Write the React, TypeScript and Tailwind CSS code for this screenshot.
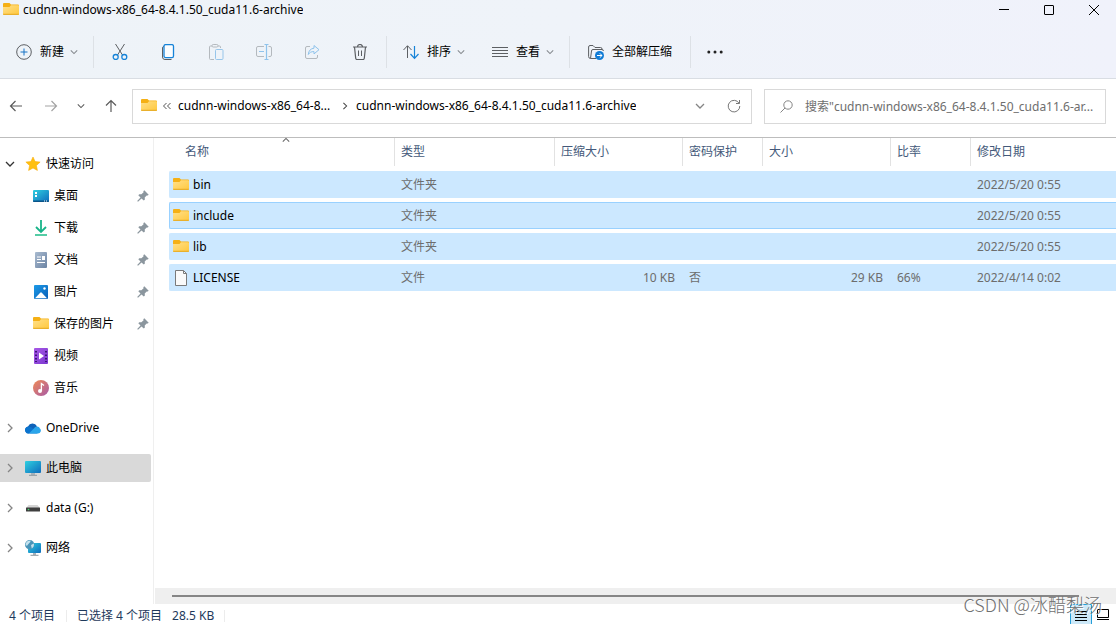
import { useState } from 'react';
import type { ReactNode } from 'react';
import clsx from 'clsx';

const ARCHIVE = 'cudnn-windows-x86_64-8.4.1.50_cuda11.6-archive';

type IconProps = { className?: string };

function FolderIcon({ className }: IconProps) {
  return (
    <svg viewBox="0 1 16 16" className={clsx('size-4 shrink-0', className)} aria-hidden="true">
      <defs>
        <linearGradient id="folder-front" x1="0" y1="0" x2="1" y2="1">
          <stop offset="0" stopColor="#ffe08a" />
          <stop offset="1" stopColor="#ffc83d" />
        </linearGradient>
      </defs>
      <path d="M0 3a1 1 0 0 1 1-1h5.500L8 3.500h7a1 1 0 0 1 1 1V8H0z" fill="#f5b015" />
      <path d="M0 6h6.500L8 4.200h7a1 1 0 0 1 1 1V13a1 1 0 0 1-1 1H1a1 1 0 0 1-1-1z" fill="url(#folder-front)" />
      <path d="M0 12.800V13a1 1 0 0 0 1 1h14a1 1 0 0 0 1-1v-.2z" fill="#e9b02c" />
    </svg>
  );
}

function FileIcon() {
  return (
    <svg viewBox="0 0 16 16" className="size-4 shrink-0" aria-hidden="true">
      <path d="M2.500.5h8l3 3v12h-11z" fill="#fafafa" stroke="#7a7a7a" />
      <path d="M10.500.5v3h3" fill="none" stroke="#7a7a7a" />
    </svg>
  );
}

function Chevron({ dir, className }: { dir: 'down' | 'right' | 'up'; className?: string }) {
  const paths = {
    down: 'M1 3l4 4 4-4',
    right: 'M3 1l4 4-4 4',
    up: 'M1 7l4-4 4 4',
  };
  return (
    <svg
      viewBox="0 0 10 10"
      className={clsx('shrink-0', className)}
      fill="none"
      stroke="currentColor"
      strokeWidth="1.300"
      aria-hidden="true"
    >
      <path d={paths[dir]} />
    </svg>
  );
}

function PinIcon() {
  return (
    <svg viewBox="0 0 12 12" className="size-3 shrink-0" aria-hidden="true">
      <path d="M7.300.3L11.700 4.700l-1 .9-1-.1-2 2.100.2 2-1.100 1-2.300-2.200L1 11.800l-.8-.8 3.300-3.500L1.300 5.200l1-1 2.100.1 2.200-2.100-.3-1z" fill="#8b969e" />
    </svg>
  );
}

const placeIcons: Record<string, ReactNode> = {
  star: <path d="M8 1l2.100 4.600 5 .5-3.700 3.400 1 4.900L8 12l-4.400 2.400 1-4.900L.9 6.100l5-.5z" fill="#ffc010" stroke="#f8ac0b" strokeWidth=".6" />,
  desktop: (
    <>
      <rect x="0" y="2" width="16" height="12" rx="1" fill="url(#screen)" />
      <path d="M2 4h2v2H2zM2 7h2v2H2z" fill="#fff" />
      <path d="M0 12.500h16v.5a1 1 0 0 1-1 1H1a1 1 0 0 1-1-1z" fill="#0b5488" />
      <path d="M11 13h1M13 13h1" stroke="#fff" />
    </>
  ),
  download: (
    <>
      <path d="M8 0v12M3 7l5 5 5-5" fill="none" stroke="#18b489" strokeWidth="1.800" />
      <path d="M2 15h12" stroke="#2bc08f" strokeWidth="1.600" />
    </>
  ),
  document: (
    <>
      <rect x="2" y="0" width="12" height="16" rx="1" fill="url(#paper)" />
      <path d="M4 5h4M4 7.500h4M4 10.500h8" stroke="#fff" strokeWidth="1.200" />
      <path d="M9 4h3v4H9z" fill="#fff" />
    </>
  ),
  picture: (
    <>
      <rect x="1" y="1" width="14" height="14" rx="1" fill="url(#photo)" />
      <path d="M2 14.200l5.200-5.500a1 1 0 0 1 1.600 0l5.200 5.500z" fill="#fff" />
      <circle cx="11.500" cy="4.500" r="1.200" fill="#fff" />
    </>
  ),
  video: (
    <>
      <rect x="1" y="0" width="14" height="16" rx="1" fill="url(#film)" />
      <path d="M2 3h2v1.500H2zM2 6.500h2V8H2zM2 10h2v1.500H2zM2 13h2v1H2zM12 3h2v1.500h-2zM12 6.500h2V8h-2zM12 10h2v1.500h-2zM12 13h2v1h-2z" fill="#3c1478" />
      <path d="M6 4.500v7L11 8z" fill="#fff" />
    </>
  ),
  music: (
    <>
      <circle cx="8" cy="8" r="8" fill="url(#disc)" />
      <circle cx="7" cy="11" r="2" fill="#fff" />
      <path d="M8.400 11V3.500l2.600 2" fill="none" stroke="#fff" strokeWidth="1.300" />
    </>
  ),
  cloud: (
    <>
      <path d="M3.500 13.500A3.500 3.500 0 0 1 3 6.600 5 5 0 0 1 12 6.200L9 10z" fill="#0f62b8" />
      <path d="M3.500 13.500A3.500 3.500 0 0 1 .6 8c2-2 5-1.500 7 .2l5 5.300z" fill="#0b74ce" />
      <path d="M4 13.500l6-6.200c2-1.400 4.200-.6 4.700 1a2.900 2.900 0 0 1-1.700 5.200z" fill="#2aa5ea" />
    </>
  ),
  computer: (
    <>
      <rect x="0" y="1" width="16" height="12" rx="1" fill="url(#screen)" />
      <path d="M6 13h4v2H6z" fill="#a8b3bb" />
      <path d="M4 15.300h8" stroke="#8b969e" />
    </>
  ),
  drive: (
    <>
      <path d="M3.500 5h9L15 8H1z" fill="#d5d5d5" />
      <rect x="1" y="7.500" width="14" height="4" rx=".6" fill="#3f3f3f" />
      <circle cx="3.500" cy="9.500" r=".8" fill="#3ee06d" />
    </>
  ),
  network: (
    <>
      <rect x="3" y="3" width="13" height="10" rx="1" fill="url(#screen)" />
      <path d="M8 13h3v2H8z" fill="#a8b3bb" />
      <path d="M5.500 15.300h8" stroke="#8b969e" />
      <circle cx="4.700" cy="4.700" r="4.700" fill="#4a94b8" />
      <path d="M1 3c1-2 3-2.600 4.500-2.500C6 2 4 3 3 4.500S2 6 .5 5zM6 5l2.800-1.500c.6 2-.4 4-2 5z" fill="#c4e2ee" />
    </>
  ),
};

function PlaceIcon({ name }: { name: string }) {
  return (
    <svg viewBox="0 0 16 16" className="size-4 shrink-0" aria-hidden="true">
      {placeIcons[name]}
    </svg>
  );
}

// Shared gradients, referenced by id from the place icons
function IconGradients() {
  const gradients = [
    { id: 'screen', from: '#2fd0e0', to: '#0f6cbd' },
    { id: 'paper', from: '#a9bbd0', to: '#6b83a3' },
    { id: 'photo', from: '#1c9be8', to: '#0a5fb8' },
    { id: 'film', from: '#a859e6', to: '#7a36d0' },
    { id: 'disc', from: '#f08a54', to: '#a75aa8' },
  ];
  return (
    <svg className="absolute size-0" aria-hidden="true">
      <defs>
        {gradients.map((g) => (
          <linearGradient key={g.id} id={g.id} x1="0" y1="0" x2="1" y2="1">
            <stop offset="0" stopColor={g.from} />
            <stop offset="1" stopColor={g.to} />
          </linearGradient>
        ))}
      </defs>
    </svg>
  );
}

function ToolIcon({ children }: { children: ReactNode }) {
  return (
    <svg viewBox="0 0 16 16" className="size-4 shrink-0" fill="none" stroke="#5c5f63" aria-hidden="true">
      {children}
    </svg>
  );
}

const toolActions = [
  {
    label: '剪切',
    disabled: false,
    icon: (
      <>
        <path d="M3.500 0l7 11M12.500 0l-7 11" />
        <circle cx="3.700" cy="13" r="2.500" stroke="#1683d8" strokeWidth="1.300" />
        <circle cx="12.300" cy="13" r="2.500" stroke="#1683d8" strokeWidth="1.300" />
      </>
    ),
  },
  {
    label: '复制',
    disabled: false,
    icon: (
      <>
        <path d="M4 2.500a1.500 1.500 0 0 0-1.500 1.500v9A2.500 2.500 0 0 0 5 15.500h6.500" />
        <rect x="4" y=".6" width="9.500" height="13" rx="1.600" fill="#fbfdff" stroke="#1683d8" strokeWidth="1.300" />
      </>
    ),
  },
  {
    label: '粘贴',
    disabled: true,
    icon: (
      <>
        <path d="M4 2H2.500a1 1 0 0 0-1 1v11.500a1 1 0 0 0 1 1H6M10 2h1.500a1 1 0 0 1 1 1v1" stroke="#b4b9be" />
        <rect x="4" y=".5" width="6" height="2.500" rx="1.200" stroke="#b4b9be" />
        <rect x="7.500" y="5.500" width="7.500" height="10" rx="1" stroke="#97c5ea" />
      </>
    ),
  },
  {
    label: '重命名',
    disabled: true,
    icon: (
      <>
        <path d="M8 2.500H2A1.500 1.500 0 0 0 .5 4v7A1.500 1.500 0 0 0 2 12.500h6M12.500 2.500H14A1.500 1.500 0 0 1 15.500 4v7a1.500 1.500 0 0 1-1.500 1.500h-1.500" stroke="#b4b9be" />
        <path d="M3 7.500h5M10.500 .5v15M8.500 .5h4M8.500 15.500h4" stroke="#8fc3ec" strokeWidth="1.200" />
      </>
    ),
  },
  {
    label: '共享',
    disabled: true,
    icon: (
      <>
        <path d="M6 2.500H3A1.500 1.500 0 0 0 1.500 4v9A1.500 1.500 0 0 0 3 14.500h9a1.500 1.500 0 0 0 1.500-1.500v-2" stroke="#b4b9be" />
        <path d="M10 1.500l5 4.200-5 4.200V7.600C7.300 7.500 5.500 8.500 4.300 10.500c.2-3.800 2.500-6 5.700-6.300z" stroke="#8fc3ec" />
      </>
    ),
  },
  {
    label: '删除',
    disabled: false,
    icon: (
      <>
        <path d="M1 3h14M5.500 3a2.500 2.500 0 0 1 5 0M2.500 3l1.200 11.300a1.300 1.300 0 0 0 1.300 1.200h6a1.300 1.300 0 0 0 1.300-1.200L13.500 3" strokeWidth="1.200" />
        <path d="M6.500 6.500v5.500M9.500 6.500v5.500" />
      </>
    ),
  },
];

const quickAccess = [
  { label: '桌面', icon: 'desktop', pinned: true },
  { label: '下载', icon: 'download', pinned: true },
  { label: '文档', icon: 'document', pinned: true },
  { label: '图片', icon: 'picture', pinned: true },
  { label: '保存的图片', icon: 'folder', pinned: true },
  { label: '视频', icon: 'video', pinned: false },
  { label: '音乐', icon: 'music', pinned: false },
];

const places = [
  { label: 'OneDrive', icon: 'cloud' },
  { label: '此电脑', icon: 'computer' },
  { label: 'data (G:)', icon: 'drive' },
  { label: '网络', icon: 'network' },
];

const columns = [
  { label: '名称', width: 'w-[226px]' },
  { label: '类型', width: 'w-[160px]' },
  { label: '压缩大小', width: 'w-[128px]' },
  { label: '密码保护', width: 'w-[80px]' },
  { label: '大小', width: 'w-[128px]' },
  { label: '比率', width: 'w-[80px]' },
  { label: '修改日期', width: '' },
];

const files = [
  { name: 'bin', type: '文件夹', packed: '', locked: '', size: '', ratio: '', date: '2022/5/20 0:55' },
  { name: 'include', type: '文件夹', packed: '', locked: '', size: '', ratio: '', date: '2022/5/20 0:55' },
  { name: 'lib', type: '文件夹', packed: '', locked: '', size: '', ratio: '', date: '2022/5/20 0:55' },
  { name: 'LICENSE', type: '文件', packed: '10 KB', locked: '否', size: '29 KB', ratio: '66%', date: '2022/4/14 0:02' },
];

function Separator() {
  return <div className="h-8 w-px shrink-0 bg-[#dde1e6]" />;
}

function TitleBar() {
  return (
    <div className="flex h-[26px] items-start">
      <div className="flex h-5 min-w-0 flex-1 items-center gap-1 pl-[3px]">
        <FolderIcon />
        <h1 className="truncate">{ARCHIVE}</h1>
      </div>
      <div className="flex h-5 text-black">
        <button className="flex w-[45px] items-center justify-center" aria-label="最小化">
          <svg viewBox="0 0 10 10" className="size-2.5" stroke="currentColor" aria-hidden="true">
            <path d="M0 4.500h10" />
          </svg>
        </button>
        <button className="flex w-[45px] items-center justify-center" aria-label="最大化">
          <svg viewBox="0 0 10 10" className="size-2.5" stroke="currentColor" fill="none" aria-hidden="true">
            <rect x=".5" y=".5" width="9" height="9" rx=".5" />
          </svg>
        </button>
        <button className="flex w-[45px] items-center justify-center" aria-label="关闭">
          <svg viewBox="0 0 10 10" className="size-2.5" stroke="currentColor" aria-hidden="true">
            <path d="M0 0l10 10M10 0L0 10" />
          </svg>
        </button>
      </div>
    </div>
  );
}

function CommandBar() {
  return (
    <div className="flex h-[52px] items-center">
      <button className="flex h-8 w-[93px] items-center gap-2 pl-4">
        <ToolIcon>
          <circle cx="8" cy="8" r="7.300" />
          <path d="M8 4.500v7M4.500 8h7" stroke="#1673c4" />
        </ToolIcon>
        新建
        <Chevron dir="down" className="-ml-0.5 size-2 text-[#85898e]" />
      </button>
      <Separator />
      <div className="flex px-0.5">
        {toolActions.map((action) => (
          <button
            key={action.label}
            disabled={action.disabled}
            aria-label={action.label}
            className="flex h-8 w-12 items-center justify-center"
          >
            <ToolIcon>{action.icon}</ToolIcon>
          </button>
        ))}
      </div>
      <Separator />
      <button className="flex h-8 w-[89px] items-center gap-2 pl-4">
        <ToolIcon>
          <path d="M4.500 14V2M.5 6l4-4.300 4 4.300" />
          <path d="M11.500 2v12M7.500 10l4 4.300 4-4.300" stroke="#1683d8" strokeWidth="1.200" />
        </ToolIcon>
        排序
        <Chevron dir="down" className="-ml-0.5 size-2 text-[#85898e]" />
      </button>
      <button className="flex h-8 w-[93px] items-center gap-2 pl-4">
        <ToolIcon>
          <path d="M0 3.500h16M0 6.500h16M0 9.500h16M0 12.500h16" />
        </ToolIcon>
        查看
        <Chevron dir="down" className="-ml-0.5 size-2 text-[#85898e]" />
      </button>
      <Separator />
      <button className="flex h-8 w-[120px] items-center gap-2 pl-[18px]">
        <ToolIcon>
          <path d="M2.500 14.500A2 2 0 0 1 .6 12.500V3A1.500 1.500 0 0 1 2 1.500h3L7 3.500h5.500A1.500 1.500 0 0 1 14 5M2.500 14.500L3.500 7a1.500 1.500 0 0 1 1.500-1.500h9a1.300 1.300 0 0 1 1.300 1.500M2.500 14.500H8" />
          <circle cx="11.500" cy="11.500" r="4.500" fill="#0f7bd6" stroke="none" />
          <path d="M9 11.500h5M11.800 9.300l2.200 2.200-2.200 2.200" stroke="#fff" />
        </ToolIcon>
        全部解压缩
      </button>
      <Separator />
      <button className="flex h-8 w-12 items-center justify-center" aria-label="更多">
        <svg viewBox="0 0 16 4" className="h-1 w-4" fill="#222" aria-hidden="true">
          <circle cx="1.800" cy="2" r="1.500" />
          <circle cx="8" cy="2" r="1.500" />
          <circle cx="14.200" cy="2" r="1.500" />
        </svg>
      </button>
    </div>
  );
}

function AddressBar() {
  const arrow = 'size-3.5 shrink-0';
  return (
    <div className="flex border-b border-[#bdbdbd] pt-2.5 pr-2.5 pb-[13px]">
      <div className="flex h-[35px] w-[132px] shrink-0 pb-0.5 text-[#5a5a5a]">
        <button className="flex w-8 items-center justify-center" aria-label="后退">
          <svg viewBox="0 0 14 14" className={arrow} fill="none" stroke="currentColor" strokeWidth="1.200" aria-hidden="true">
            <path d="M13 7H1.500M6.500 2l-5 5 5 5" />
          </svg>
        </button>
        <button className="flex w-[38px] items-center justify-center text-[#a3a3a3]" aria-label="前进" disabled>
          <svg viewBox="0 0 14 14" className={arrow} fill="none" stroke="currentColor" strokeWidth="1.200" aria-hidden="true">
            <path d="M1 7h11.500M7.500 2l5 5-5 5" />
          </svg>
        </button>
        <button className="flex w-[22px] items-center justify-center" aria-label="最近浏览的位置">
          <Chevron dir="down" className="size-2" />
        </button>
        <button className="flex w-[37px] items-center justify-center" aria-label="上移">
          <svg viewBox="0 0 14 14" className={arrow} fill="none" stroke="currentColor" strokeWidth="1.200" aria-hidden="true">
            <path d="M7 13V1.500M2 6.500l5-5 5 5" />
          </svg>
        </button>
      </div>

      <div className="flex h-[35px] min-w-0 flex-1 items-center border border-[#d9d9d9] pb-px pl-2">
        <FolderIcon />
        <button className="ml-1.5 flex w-[15px] shrink-0 items-center" aria-label="显示上级">
          <svg viewBox="0 0 8 8" className="size-2" fill="none" stroke="#555" aria-hidden="true">
            <path d="M3.500 1l-3 3 3 3M7.500 1l-3 3 3 3" />
          </svg>
        </button>
        <button className="w-[156px] shrink-0 text-left">cudnn-windows-x86_64-8...</button>
        <Chevron dir="right" className="mx-[7px] size-2 text-[#444]" />
        <button className="min-w-0 truncate text-left">{ARCHIVE}</button>
        <div className="ml-auto flex h-full shrink-0">
          <button className="flex w-[34px] items-center justify-center" aria-label="以前的位置">
            <Chevron dir="down" className="size-2.5 text-[#858585]" />
          </button>
          <button className="flex w-[34px] items-center justify-center" aria-label="刷新">
            <svg viewBox="0 0 14 14" className="size-3.5" fill="none" stroke="#777" aria-hidden="true">
              <path d="M12 4.200A5.800 5.800 0 1 0 12.800 7M12.500 1v3.500H9" />
            </svg>
          </button>
        </div>
      </div>

      <label className="ml-3 flex h-[35px] w-[342px] items-center gap-3 border border-[#d9d9d9] pr-1 pl-[15px]">
        <svg viewBox="0 0 13 13" className="size-[13px] shrink-0" fill="none" stroke="#858585" aria-hidden="true">
          <circle cx="8" cy="5" r="4.200" />
          <path d="M5 8L.5 12.500" />
        </svg>
        <input
          type="text"
          aria-label="搜索"
          placeholder={`搜索"cudnn-windows-x86_64-8.4.1.50_cuda11.6-ar...`}
          className="min-w-0 flex-1 outline-none placeholder:text-[#6e6e6e]"
        />
      </label>
    </div>
  );
}

function NavPane() {
  const [selected, setSelected] = useState('此电脑');
  return (
    <nav className="w-[154px] shrink-0 border-r border-[#efefef] pt-2.5 pr-0.5">
      <button className="flex h-8 w-full items-center pl-[5px] text-left">
        <Chevron dir="down" className="size-2.5 text-[#333]" />
        <span className="ml-2.5 flex items-center gap-[5px]">
          <PlaceIcon name="star" />
          快速访问
        </span>
      </button>
      <ul>
        {quickAccess.map((item) => (
          <li key={item.label}>
            <button className="flex h-8 w-full items-center gap-[5px] pr-0.5 pl-[33px] text-left">
              {item.icon === 'folder' ? <FolderIcon /> : <PlaceIcon name={item.icon} />}
              <span className="flex-1">{item.label}</span>
              {item.pinned && <PinIcon />}
            </button>
          </li>
        ))}
      </ul>
      <ul className="mt-2.5 flex flex-col gap-3">
        {places.map((place) => (
          <li key={place.label}>
            <button
              onClick={() => setSelected(place.label)}
              className={clsx(
                'flex h-7 w-full items-center rounded-r-xs pl-[5px] text-left',
                selected === place.label && 'bg-[#d9d9d9]',
              )}
            >
              <Chevron dir="right" className="size-2.5 text-[#858585]" />
              <span className="ml-2.5 flex items-center gap-[5px]">
                <PlaceIcon name={place.icon} />
                {place.label}
              </span>
            </button>
          </li>
        ))}
      </ul>
    </nav>
  );
}

function FileTable() {
  return (
    <table className="-mt-1 w-full table-fixed border-separate border-spacing-x-0 border-spacing-y-1">
      <thead>
        <tr>
          {columns.map((col, i) => (
            <th key={col.label} className={clsx('relative h-[29px] p-0 text-left align-top font-normal text-[#44597a]', col.width)}>
              {i === 0 && <Chevron dir="up" className="absolute -top-0.5 left-1/2 size-2 text-[#666]" />}
              <div
                className={clsx(
                  'flex h-7 items-center',
                  i === 0 ? 'pl-4' : 'pl-1.5',
                  i < columns.length - 1 && 'border-r border-[#e2e2e2]',
                )}
              >
                {col.label}
              </div>
            </th>
          ))}
        </tr>
      </thead>
      <tbody>
        {files.map((file) => {
          const cell = clsx(
            'h-[27px] border-y bg-[#cce8ff] py-0 text-[#6d6d6d]',
            file.name === 'include' ? 'border-[#99d1ff]' : 'border-[#cce8ff]',
          );
          return (
            <tr key={file.name}>
              <td className={clsx(cell, 'rounded-l-xs border-l pl-[3px]')}>
                <div className="flex items-center gap-1 text-black">
                  {file.type === '文件夹' ? <FolderIcon /> : <FileIcon />}
                  {file.name}
                </div>
              </td>
              <td className={clsx(cell, 'pl-1.5')}>{file.type}</td>
              <td className={clsx(cell, 'pr-2 text-right')}>{file.packed}</td>
              <td className={clsx(cell, 'pl-1.5')}>{file.locked}</td>
              <td className={clsx(cell, 'pr-2 text-right')}>{file.size}</td>
              <td className={clsx(cell, 'pl-1.5')}>{file.ratio}</td>
              <td className={clsx(cell, 'pl-1.5')}>{file.date}</td>
            </tr>
          );
        })}
      </tbody>
    </table>
  );
}

function StatusBar() {
  return (
    <footer className="flex h-5 shrink-0 overflow-hidden pl-[9px] text-[#1e395b]">
      <div className="flex items-center pt-1">
        <span className="w-[57px]">4 个项目</span>
        <div className="h-3 w-px bg-[#ececec]" />
        <span className="ml-2.5">已选择 4 个项目</span>
        <span className="ml-2.5">28.5 KB</span>
        <div className="ml-2.5 h-3 w-px bg-[#ececec]" />
      </div>
      <div className="ml-auto flex pr-1">
        <button className="flex h-[22px] w-[22px] justify-center border border-[#26a0da] bg-[#cce8f8] pt-1" aria-label="详细信息">
          <svg viewBox="0 0 12 12" className="size-3" stroke="#000" aria-hidden="true">
            <path d="M0 2.500h12M0 5.500h12M0 8.500h12M0 11.500h12" />
          </svg>
        </button>
        <button className="flex h-[22px] w-5 justify-end pt-1 pr-[3px]" aria-label="大缩略图">
          <svg viewBox="0 0 12 12" className="size-3" fill="none" stroke="#000" aria-hidden="true">
            <path d="M.5 1.500h11v8H.5zM0 11.500h12" />
          </svg>
        </button>
      </div>
    </footer>
  );
}

export default function App() {
  return (
    <div className="relative flex h-screen flex-col overflow-hidden bg-white font-['Noto_Sans','Noto_Sans_CJK_SC',sans-serif] text-[12px] leading-4 text-black">
      <IconGradients />
      <header className="border-b border-[#d9dde3] bg-linear-to-r from-[#eef3f8] via-[#eff3f9] to-[#f0f2fb]">
        <TitleBar />
        <CommandBar />
      </header>
      <AddressBar />
      <div className="flex min-h-0 flex-1">
        <NavPane />
        <main className="flex min-w-0 flex-1 flex-col">
          <div className="min-h-0 flex-1 pl-[15px]">
            <FileTable />
          </div>
          <div className="ml-px flex h-4 items-center bg-[#efefef] pr-[37px] pl-[17px]">
            <div className="h-0.5 flex-1 bg-[#868686]" />
          </div>
        </main>
      </div>
      <StatusBar />
      <div className="pointer-events-none absolute right-3.5 bottom-2 font-['Noto_Sans_CJK_SC',sans-serif] text-[18px] leading-6 font-light text-[#707070] text-shadow-[1px_1px_0_#ffffff]">
        CSDN @冰醋梨汤
      </div>
    </div>
  );
}
